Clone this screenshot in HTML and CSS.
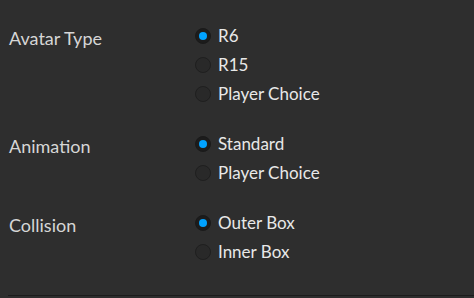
FILE: index.html
```html
<!DOCTYPE html>
<html>
<head>
  <title>Avatar Settings</title>
  <link rel="stylesheet" href="styles.css">
</head>
<body>
  <div class="panel">
    <div class="setting">
      <div class="setting-label">Avatar Type</div>
      <div class="options">
        <div class="option"><span class="radio selected"></span><span>R6</span></div>
        <div class="option"><span class="radio"></span><span>R15</span></div>
        <div class="option"><span class="radio"></span><span>Player Choice</span></div>
      </div>
    </div>
    <div class="setting">
      <div class="setting-label">Animation</div>
      <div class="options">
        <div class="option"><span class="radio selected"></span><span>Standard</span></div>
        <div class="option"><span class="radio"></span><span>Player Choice</span></div>
      </div>
    </div>
    <div class="setting">
      <div class="setting-label">Collision</div>
      <div class="options">
        <div class="option"><span class="radio selected"></span><span>Outer Box</span></div>
        <div class="option"><span class="radio"></span><span>Inner Box</span></div>
      </div>
    </div>
  </div>
  <div class="divider"></div>
</body>
</html>
```

FILE: styles.css
```css
body {
  width: 474px;
  height: 298px;
  margin: 0;
  padding: 0;
  background-color: #2e2e2e;
  font-family: Lato, 'Noto Sans', sans-serif;
  overflow: hidden;
  display: flex;
  flex-direction: column;
}

.panel {
  flex-grow: 1;
  display: flex;
  flex-direction: column;
  gap: 21px;
  padding: 21px 0 0 9px;
}

.setting {
  display: flex;
}

.setting-label {
  width: 186px;
  flex-shrink: 0;
  font-size: 18px;
  color: #d6d6d6;
  line-height: 29px;
  padding-top: 3px;
}

.options {
  display: flex;
  flex-direction: column;
}

.option {
  display: flex;
  align-items: center;
  gap: 7px;
  height: 29px;
  font-size: 17px;
  color: #e8e8e8;
}

.radio {
  width: 16px;
  height: 16px;
  box-sizing: border-box;
  border-radius: 50%;
  background-color: #292929;
  border: 1px solid #1f1f1f;
  display: flex;
  align-items: center;
  justify-content: center;
}

.radio.selected {
  background-color: #1c1c1c;
  border-color: #1a1a1a;
}

.radio.selected::after {
  content: '';
  width: 8px;
  height: 8px;
  border-radius: 50%;
  background-color: #00a2ff;
}

.divider {
  height: 1px;
  margin: 0 0 2px 8px;
  background-color: #1c1c1c;
}
```
